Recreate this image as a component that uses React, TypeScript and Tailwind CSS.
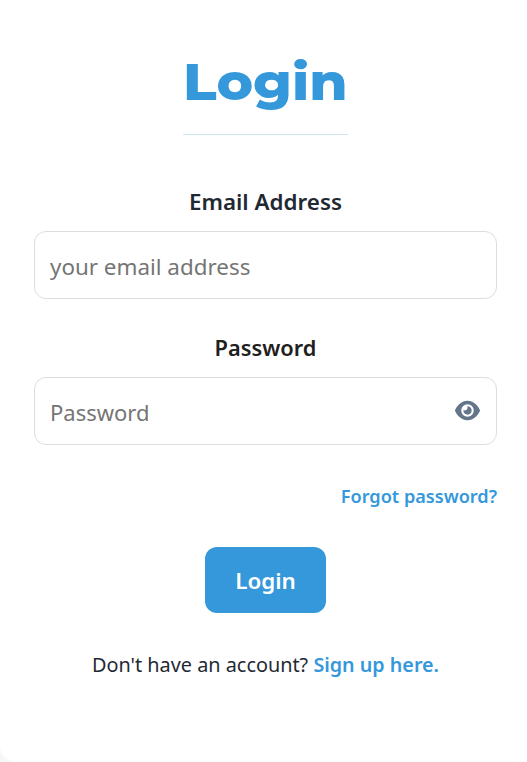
import React from "react";
import { FaEye } from "react-icons/fa6";

export default function App() {
  return (
    <div className="w-[527px] h-[762px] bg-[#f7f7f7] overflow-hidden" style={{ fontFamily: '"Noto Sans", sans-serif' }}>
      <div className="h-full bg-white rounded-bl-[16px] pl-[34px] pr-[30px] flex flex-col">
        <div className="self-center mt-[48px] flex flex-col items-center">
          <h1 className="text-[51px] leading-[68px] font-extrabold scale-x-[1.08] text-[#3498db]" style={{ fontFamily: 'Montserrat, Inter, sans-serif' }}>Login</h1>
          <div className="w-[165px] h-px mt-[18px] bg-[#cfe6f0]"></div>
        </div>
        <label className="mt-[51px] text-center text-[22.400px] leading-[32px] font-semibold text-[#1f2933]">Email Address</label>
        <div className="mt-[13px] h-[68px] border border-[#dddddd] rounded-[12px] px-[15px] pt-[3px] flex items-center text-[22.400px] text-[#757575]">your email address</div>
        <label className="mt-[33px] text-center text-[21.800px] leading-[32px] font-semibold text-[#1f2020]">Password</label>
        <div className="mt-[13px] h-[68px] border border-[#dddddd] rounded-[12px] pl-[15px] pr-[16px] flex items-center justify-between text-[22px] text-[#757575]">
          <span className="pt-[2px]">Password</span>
          <FaEye className="text-[#64748b] w-[25px] h-[25px] mb-[2px]" />
        </div>
        <a className="mt-[37px] self-end text-[18.100px] leading-[28px] font-semibold text-[#3498db]">Forgot password?</a>
        <button className="mt-[37px] self-center w-[121px] h-[66px] pt-[2px] rounded-[12px] bg-[#3498db] text-white text-[22.400px] font-semibold">Login</button>
        <p className="mt-[37px] text-center text-[19.850px] leading-[30px] text-[#1f2933]">Don't have an account? <a className="font-semibold text-[19.700px] text-[#3498db]">Sign up here.</a></p>
      </div>
    </div>
  );
}
